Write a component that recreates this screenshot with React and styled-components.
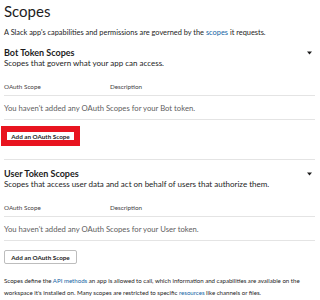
import React from 'react';
import styled, {createGlobalStyle} from 'styled-components';

const GlobalStyle = createGlobalStyle`
  body {
    margin: 0;
    background: #ffffff;
    font-family: Lato, 'Noto Sans', sans-serif;
    color: #1d1c1d;
  }
`;

const Page = styled.div`
  width: 320px;
  height: 300px;
  overflow: hidden;
  box-sizing: border-box;
  padding: 0 5px 0 4px;
`;

const Title = styled.h1`
  margin: 2px 0 0;
  font-size: 15px;
  line-height: 18px;
  font-weight: 400;
`;

const Intro = styled.p`
  margin: 8px 0 0;
  font-size: 7.4px;
  line-height: 10px;
`;

const Link = styled.span`
  color: #1264a3;
`;

const Section = styled.section`
  margin-top: ${p => p.$first ? '10px' : '16px'};
  padding-top: ${p => p.$first ? '0' : '9px'};
  border-top: ${p => p.$first ? 'none' : '1px solid #e4e4e4'};
`;

const SectionHead = styled.div`
  display: flex;
  align-items: center;
  justify-content: space-between;
`;

const Heading = styled.h2`
  margin: 0;
  font-size: 9px;
  line-height: 10px;
  font-weight: 700;
`;

const Caret = styled.svg`
  width: 5px;
  height: 4px;
  margin-right: 3px;
`;

const Sub = styled.p`
  margin: 0;
  font-size: 8px;
  line-height: 10px;
`;

const TableHead = styled.div`
  display: grid;
  grid-template-columns: 106px 1fr;
  margin-top: 15px;
  padding-bottom: 4px;
  border-bottom: 1px solid #e4e4e4;
  font-size: 6.3px;
  line-height: 8px;
  color: #454245;
`;

const EmptyRow = styled.div`
  padding: 7px 0 6px;
  border-bottom: 1px solid #e4e4e4;
  font-size: 7.7px;
  line-height: 10px;
  color: #616061;
`;

const Button = styled.button`
  display: block;
  margin-top: 9px;
  height: 14px;
  width: 73px;
  padding: 0;
  box-sizing: border-box;
  border: 1px solid #bdbdbd;
  border-radius: ${p => p.$marked ? '0' : '2px'};
  background: #ffffff;
  font-family: Lato, 'Noto Sans', sans-serif;
  font-size: 6.3px;
  font-weight: 700;
  color: #1d1c1d;
  outline: ${p => p.$marked ? '6px solid #e8141f' : 'none'};
  outline-offset: -3px;
`;

const Footer = styled.p`
  margin: 11px 0 0;
  font-size: 6.1px;
  line-height: 12px;
`;

const ScopeSection = ({first, title, sub, token, marked}) => (
  <Section $first={first}>
    <SectionHead>
      <Heading>{title}</Heading>
      <Caret viewBox="0 0 5 4">
        <path d="M0 0.5 H5 L2.5 3.5 Z" fill="#1d1c1d" />
      </Caret>
    </SectionHead>
    <Sub>{sub}</Sub>
    <TableHead>
      <span>OAuth Scope</span>
      <span>Description</span>
    </TableHead>
    <EmptyRow>You haven't added any OAuth Scopes for your {token} token.</EmptyRow>
    <Button $marked={marked}>Add an OAuth Scope</Button>
  </Section>
);

const App = () => (
  <Page>
    <GlobalStyle />
    <Title>Scopes</Title>
    <Intro>
      A Slack app's capabilities and permissions are governed by the <Link>scopes</Link> it requests.
    </Intro>
    <ScopeSection
      first
      title="Bot Token Scopes"
      sub="Scopes that govern what your app can access."
      token="Bot"
      marked
    />
    <ScopeSection
      title="User Token Scopes"
      sub="Scopes that access user data and act on behalf of users that authorize them."
      token="User"
    />
    <Footer>
      Scopes define the <Link>API methods</Link> an app is allowed to call, which information and capabilities are available on
      the workspace it's installed on. Many scopes are restricted to specific <Link>resources</Link> like channels or files.
    </Footer>
  </Page>
);

export default App;
